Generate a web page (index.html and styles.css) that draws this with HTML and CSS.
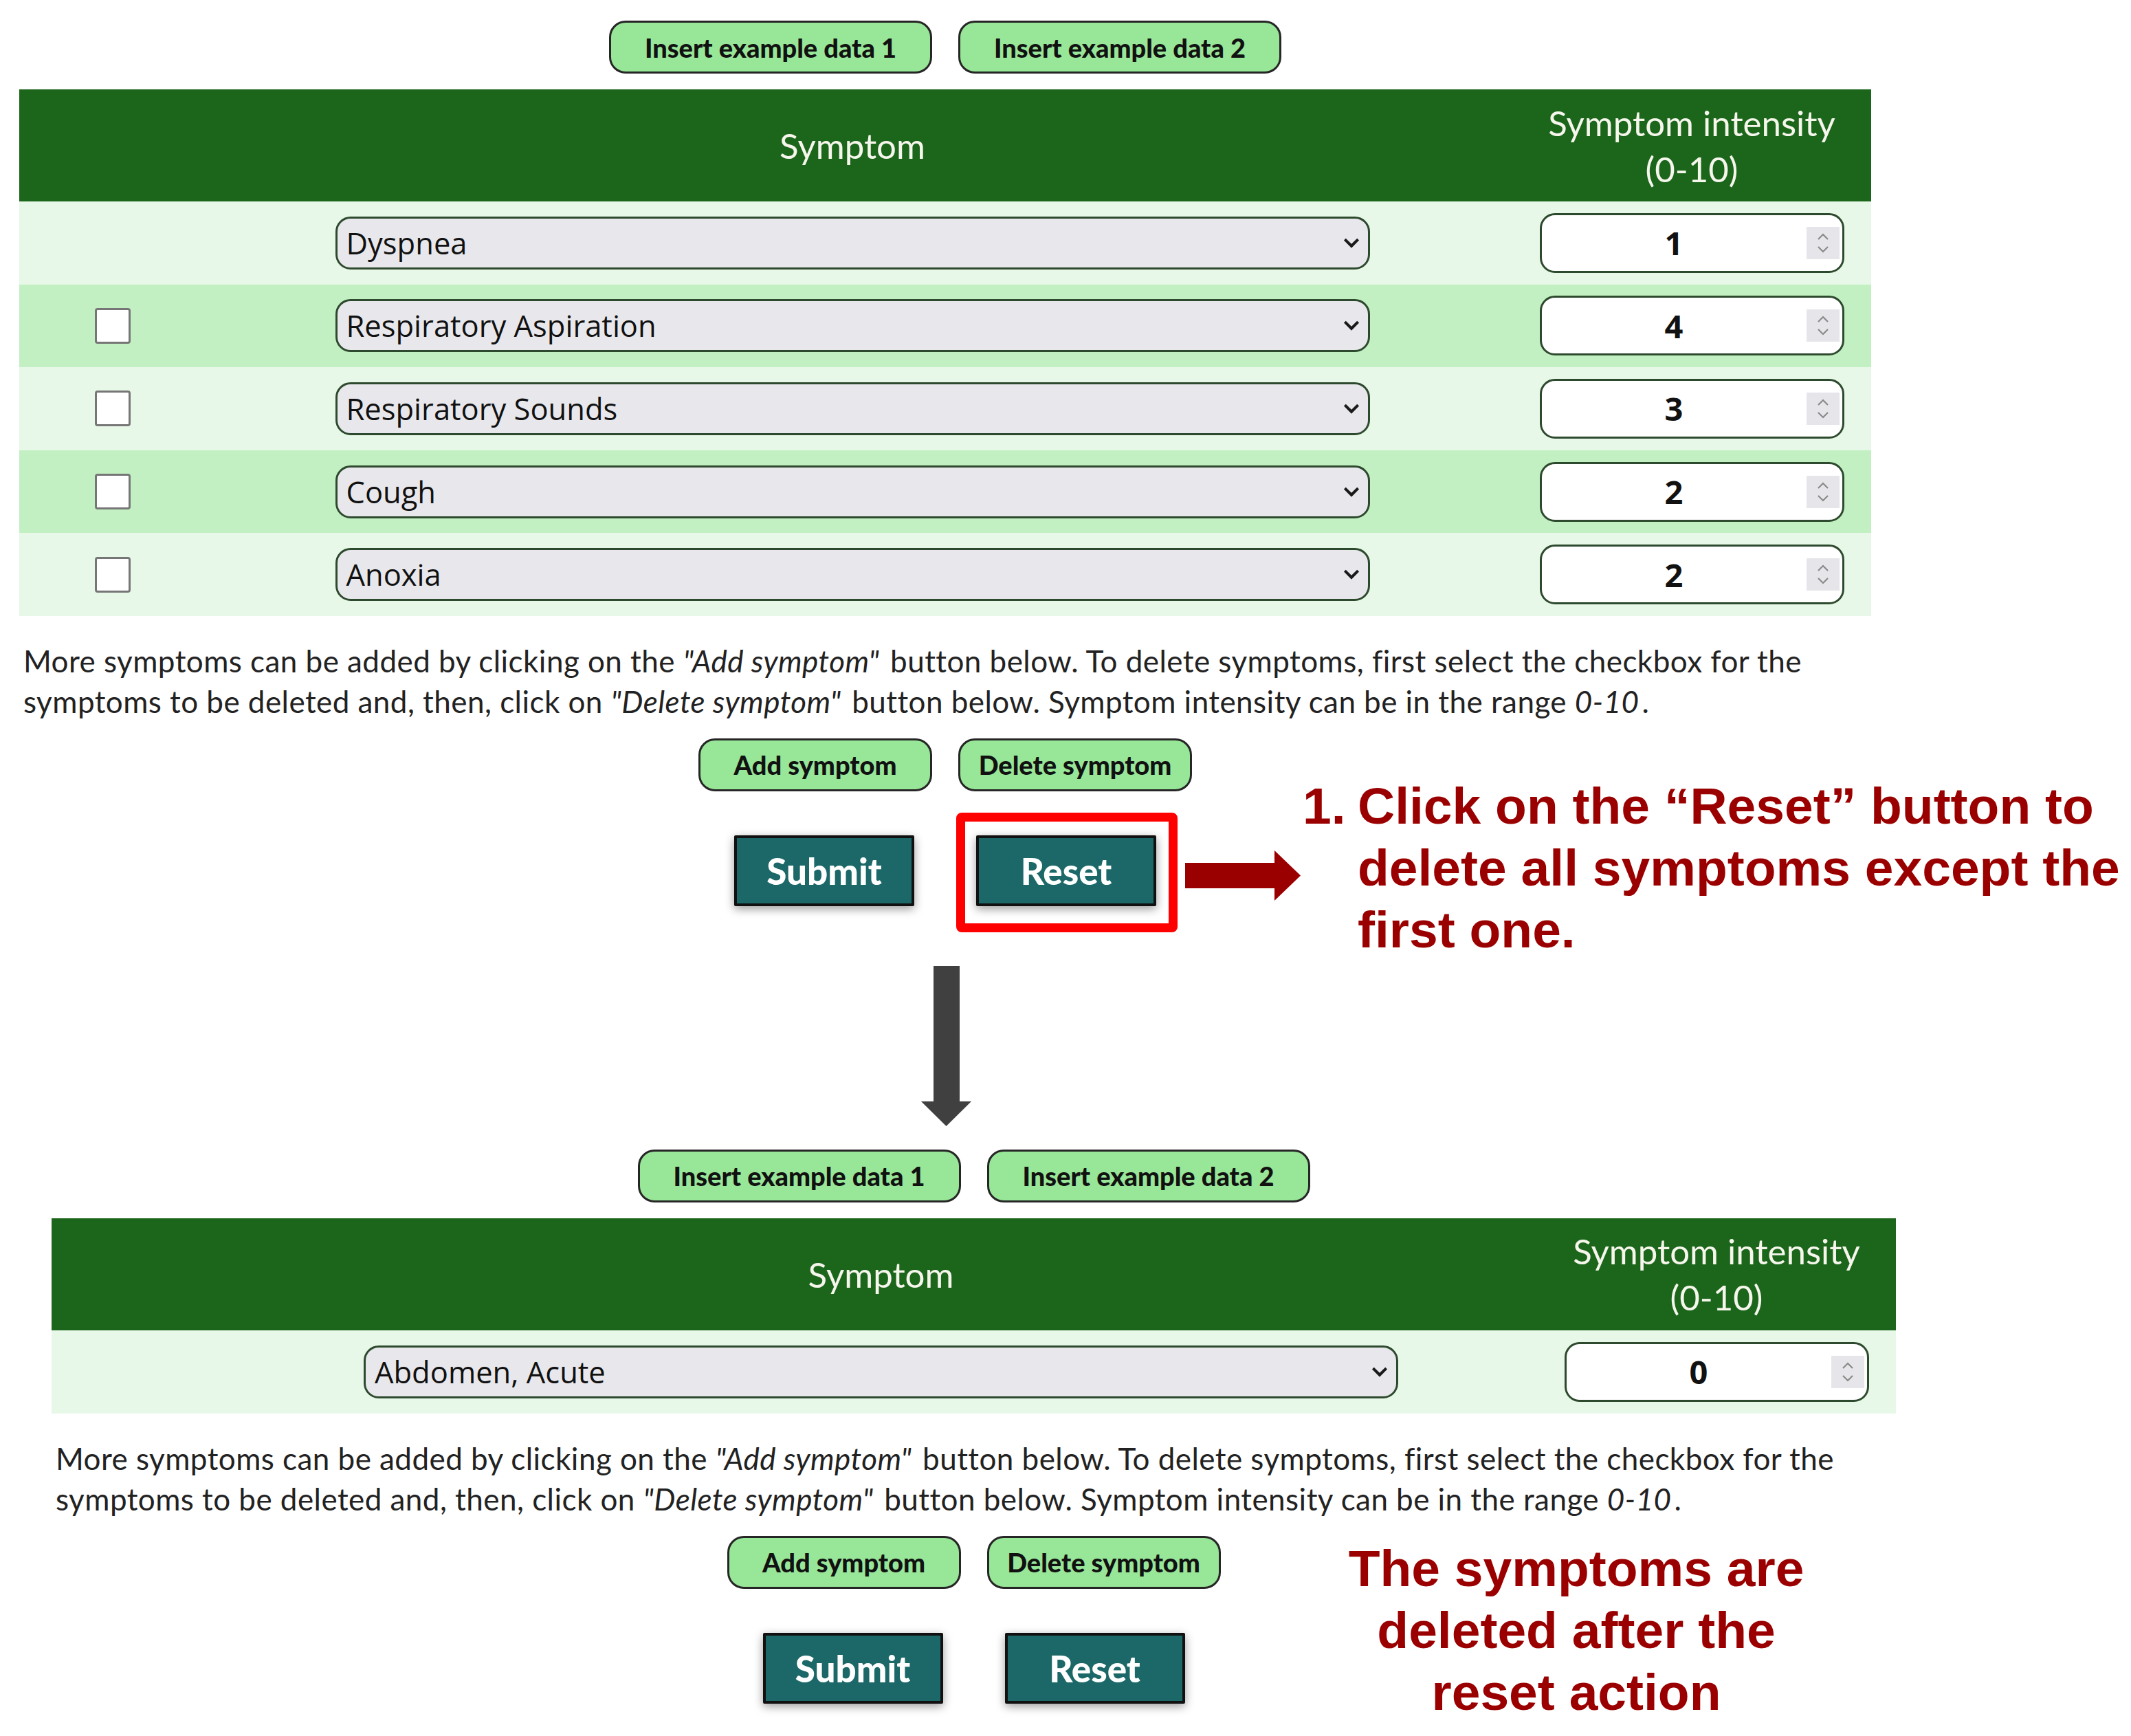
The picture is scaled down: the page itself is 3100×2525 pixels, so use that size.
FILE: index.html
```html
<!DOCTYPE html>
<html lang="en">
<head>
<meta charset="utf-8">
<title>Symptom form – reset</title>
<link rel="stylesheet" href="styles.css">
</head>
<body>
<div class="page">

  <section class="form form-top">
    <div class="btn-row">
      <button class="pill pill-wide">Insert example data 1</button>
      <button class="pill pill-wide">Insert example data 2</button>
    </div>

    <div class="table">
      <div class="th"></div>
      <div class="th">Symptom</div>
      <div class="th th-int">Symptom intensity<br>(0-10)</div>

      <div class="row light">
        <div class="cell"></div>
        <div class="cell cell-sel"><div class="select"><span>Dyspnea</span><svg class="chev" viewBox="0 0 22 14"><path d="M2 2 L11 11 L20 2" /></svg></div></div>
        <div class="cell cell-num"><div class="num"><span>1</span><svg class="spin" viewBox="0 0 48 47"><rect width="48" height="47" /><path d="M17 18 L24 11 L31 18 M17 29 L24 36 L31 29" /></svg></div></div>
      </div>

      <div class="row mid">
        <div class="cell cell-chk"><span class="chk"></span></div>
        <div class="cell cell-sel"><div class="select"><span>Respiratory Aspiration</span><svg class="chev" viewBox="0 0 22 14"><path d="M2 2 L11 11 L20 2" /></svg></div></div>
        <div class="cell cell-num"><div class="num"><span>4</span><svg class="spin" viewBox="0 0 48 47"><rect width="48" height="47" /><path d="M17 18 L24 11 L31 18 M17 29 L24 36 L31 29" /></svg></div></div>
      </div>

      <div class="row light">
        <div class="cell cell-chk"><span class="chk"></span></div>
        <div class="cell cell-sel"><div class="select"><span>Respiratory Sounds</span><svg class="chev" viewBox="0 0 22 14"><path d="M2 2 L11 11 L20 2" /></svg></div></div>
        <div class="cell cell-num"><div class="num"><span>3</span><svg class="spin" viewBox="0 0 48 47"><rect width="48" height="47" /><path d="M17 18 L24 11 L31 18 M17 29 L24 36 L31 29" /></svg></div></div>
      </div>

      <div class="row mid">
        <div class="cell cell-chk"><span class="chk"></span></div>
        <div class="cell cell-sel"><div class="select"><span>Cough</span><svg class="chev" viewBox="0 0 22 14"><path d="M2 2 L11 11 L20 2" /></svg></div></div>
        <div class="cell cell-num"><div class="num"><span>2</span><svg class="spin" viewBox="0 0 48 47"><rect width="48" height="47" /><path d="M17 18 L24 11 L31 18 M17 29 L24 36 L31 29" /></svg></div></div>
      </div>

      <div class="row light">
        <div class="cell cell-chk"><span class="chk"></span></div>
        <div class="cell cell-sel"><div class="select"><span>Anoxia</span><svg class="chev" viewBox="0 0 22 14"><path d="M2 2 L11 11 L20 2" /></svg></div></div>
        <div class="cell cell-num"><div class="num"><span>2</span><svg class="spin" viewBox="0 0 48 47"><rect width="48" height="47" /><path d="M17 18 L24 11 L31 18 M17 29 L24 36 L31 29" /></svg></div></div>
      </div>
    </div>

    <p class="help">More symptoms can be added by clicking on the <i>"Add symptom"</i> button below. To delete symptoms, first select the checkbox for the symptoms to be deleted and, then, click on <i>"Delete symptom"</i> button below. Symptom intensity can be in the range <i>0-10</i>.</p>

    <div class="btn-row btn-row-small">
      <button class="pill pill-small">Add symptom</button>
      <button class="pill pill-small">Delete symptom</button>
    </div>

    <div class="action-row">
      <button class="action">Submit</button>
      <span class="reset-wrap"><button class="action">Reset</button><span class="highlight"></span></span>
    </div>

    <div class="connector">
      <svg class="down-arrow" viewBox="0 0 73 233"><rect x="18" y="0" width="38" height="197" /><polygon points="0,197 73,197 36.5,233" /></svg>
    </div>
  </section>

  <section class="form form-bottom">
    <div class="btn-row">
      <button class="pill pill-wide">Insert example data 1</button>
      <button class="pill pill-wide">Insert example data 2</button>
    </div>

    <div class="table">
      <div class="th"></div>
      <div class="th">Symptom</div>
      <div class="th th-int">Symptom intensity<br>(0-10)</div>

      <div class="row light">
        <div class="cell"></div>
        <div class="cell cell-sel"><div class="select"><span>Abdomen, Acute</span><svg class="chev" viewBox="0 0 22 14"><path d="M2 2 L11 11 L20 2" /></svg></div></div>
        <div class="cell cell-num"><div class="num"><span>0</span><svg class="spin" viewBox="0 0 48 47"><rect width="48" height="47" /><path d="M17 18 L24 11 L31 18 M17 29 L24 36 L31 29" /></svg></div></div>
      </div>
    </div>

    <p class="help">More symptoms can be added by clicking on the <i>"Add symptom"</i> button below. To delete symptoms, first select the checkbox for the symptoms to be deleted and, then, click on <i>"Delete symptom"</i> button below. Symptom intensity can be in the range <i>0-10</i>.</p>

    <div class="btn-row btn-row-small">
      <button class="pill pill-small">Add symptom</button>
      <button class="pill pill-small">Delete symptom</button>
    </div>

    <div class="action-row">
      <button class="action">Submit</button>
      <button class="action">Reset</button>
    </div>
  </section>

  <svg class="right-arrow" viewBox="0 0 168 73"><rect x="0" y="18" width="132" height="37" /><polygon points="130,0 168,36.5 130,73" /></svg>

  <div class="note note-1">
    <span class="note-num">1.</span>
    <span class="note-text">Click on the “Reset” button to<br>delete all symptoms except the<br>first one.</span>
  </div>

  <div class="note note-2">The symptoms are<br>deleted after the<br>reset action</div>

</div>
</body>
</html>
```

FILE: styles.css
```css
html, body {
  margin: 0;
  padding: 0;
  background: #ffffff;
}

.page {
  position: relative;
  width: 3100px;
  height: 2525px;
  padding-top: 30px;
  box-sizing: border-box;
  overflow: hidden;
  font-family: Lato, "Noto Sans", sans-serif;
  color: #1a1a1a;
}

.form {
  display: flex;
  flex-direction: column;
}

.form-top {
  width: 2694px;
  margin-left: 28px;
}

.form-bottom {
  width: 2683px;
  margin-left: 75px;
}

/* ---------- green pill buttons ---------- */
.btn-row {
  display: flex;
  justify-content: center;
  gap: 38px;
  height: 77px;
}

.pill {
  height: 77px;
  box-sizing: border-box;
  background: #98e698;
  border: 3px solid #262626;
  border-radius: 24px;
  font-family: Lato, "Noto Sans", sans-serif;
  font-weight: 900;
  font-size: 38px;
  color: #111111;
  padding: 0;
  cursor: pointer;
}

.pill-wide {
  width: 470px;
}

.pill-small {
  width: 340px;
}

.btn-row-small {
  margin-top: 24px;
}

/* ---------- table ---------- */
.table {
  margin-top: 23px;
  display: grid;
  grid-template-columns: 252px 1fr 522px;
  grid-template-rows: 163px;
  grid-auto-rows: 120.6px;
}

.th {
  background: #1b661b;
  color: #f6f6ec;
  font-size: 51px;
  line-height: 67px;
  display: flex;
  align-items: center;
  justify-content: center;
  text-align: center;
}

.row {
  display: contents;
}

.row.light > .cell {
  background: #e8f8e8;
}

.row.mid > .cell {
  background: #c2f0c2;
}

.cell {
  display: flex;
  align-items: center;
}

.cell-chk {
  justify-content: flex-start;
  padding-left: 110px;
}

.cell-sel,
.cell-num {
  justify-content: center;
}

.chk {
  width: 52px;
  height: 52px;
  box-sizing: border-box;
  background: #ffffff;
  border: 3px solid #767676;
  border-radius: 4px;
}

.select {
  width: 1505px;
  height: 77px;
  box-sizing: border-box;
  background: #e8e8ec;
  border: 3px solid #2e4a2e;
  border-radius: 22px;
  display: flex;
  align-items: center;
  justify-content: space-between;
  padding: 0 12px 0 13px;
  font-family: "Open Sans", "Noto Sans", sans-serif;
  font-size: 43.5px;
  color: #111111;
}

.chev {
  width: 24px;
  height: 15px;
  fill: none;
  stroke: #1a1a1a;
  stroke-width: 3.8;
}

.num {
  width: 443px;
  height: 87px;
  box-sizing: border-box;
  background: #ffffff;
  border: 3px solid #2e4a2e;
  border-radius: 22px;
  display: flex;
  align-items: center;
  padding-right: 4px;
  font-family: "Open Sans", "Noto Sans", sans-serif;
  font-weight: 700;
  font-size: 47px;
  color: #111111;
}

.num span {
  flex: 1;
  text-align: center;
}

.spin {
  width: 48px;
  height: 47px;
}

.spin rect {
  fill: #e6e6ea;
}

.spin path {
  fill: none;
  stroke: #8a8a8a;
  stroke-width: 2.2;
}

/* ---------- help text ---------- */
.help {
  margin: 36px 0 0 6px;
  font-size: 44px;
  letter-spacing: 0.45px;
  line-height: 59px;
  color: #222222;
}

.help i {
  padding-right: 4px;
}

/* ---------- submit / reset ---------- */
.action-row {
  margin-top: 64px;
  display: flex;
  justify-content: center;
  gap: 90px;
  height: 103px;
}

.action {
  width: 262px;
  height: 103px;
  box-sizing: border-box;
  background: #1c6868;
  border: 4px solid #111111;
  border-radius: 2px;
  box-shadow: 0 4px 14px rgba(0, 0, 0, 0.4);
  color: #ffffff;
  font-family: Lato, "Noto Sans", sans-serif;
  font-weight: 900;
  font-size: 53px;
  padding: 0;
  cursor: pointer;
}

.reset-wrap {
  position: relative;
  display: block;
}

.highlight {
  position: absolute;
  left: -29px;
  right: -31px;
  top: -33px;
  bottom: -38px;
  border: 13px solid #ff0000;
  border-radius: 8px;
}

/* ---------- arrows and notes ---------- */
.connector {
  display: flex;
  justify-content: center;
  margin-top: 87px;
  margin-bottom: 34px;
}

.down-arrow {
  width: 73px;
  height: 233px;
  fill: #404040;
  margin-left: 2px;
}

.right-arrow {
  position: absolute;
  left: 1724px;
  top: 1237px;
  width: 168px;
  height: 73px;
  fill: #9b0000;
}

.note {
  position: absolute;
  font-family: "Liberation Sans", Arial, sans-serif;
  font-weight: 700;
  font-size: 75px;
  line-height: 90px;
  color: #9b0000;
  white-space: nowrap;
}

.note-1 {
  left: 1895px;
  top: 1127px;
  display: flex;
}

.note-num {
  width: 80px;
}

.note-2 {
  left: 1893px;
  top: 2236px;
  width: 800px;
  text-align: center;
}
```
